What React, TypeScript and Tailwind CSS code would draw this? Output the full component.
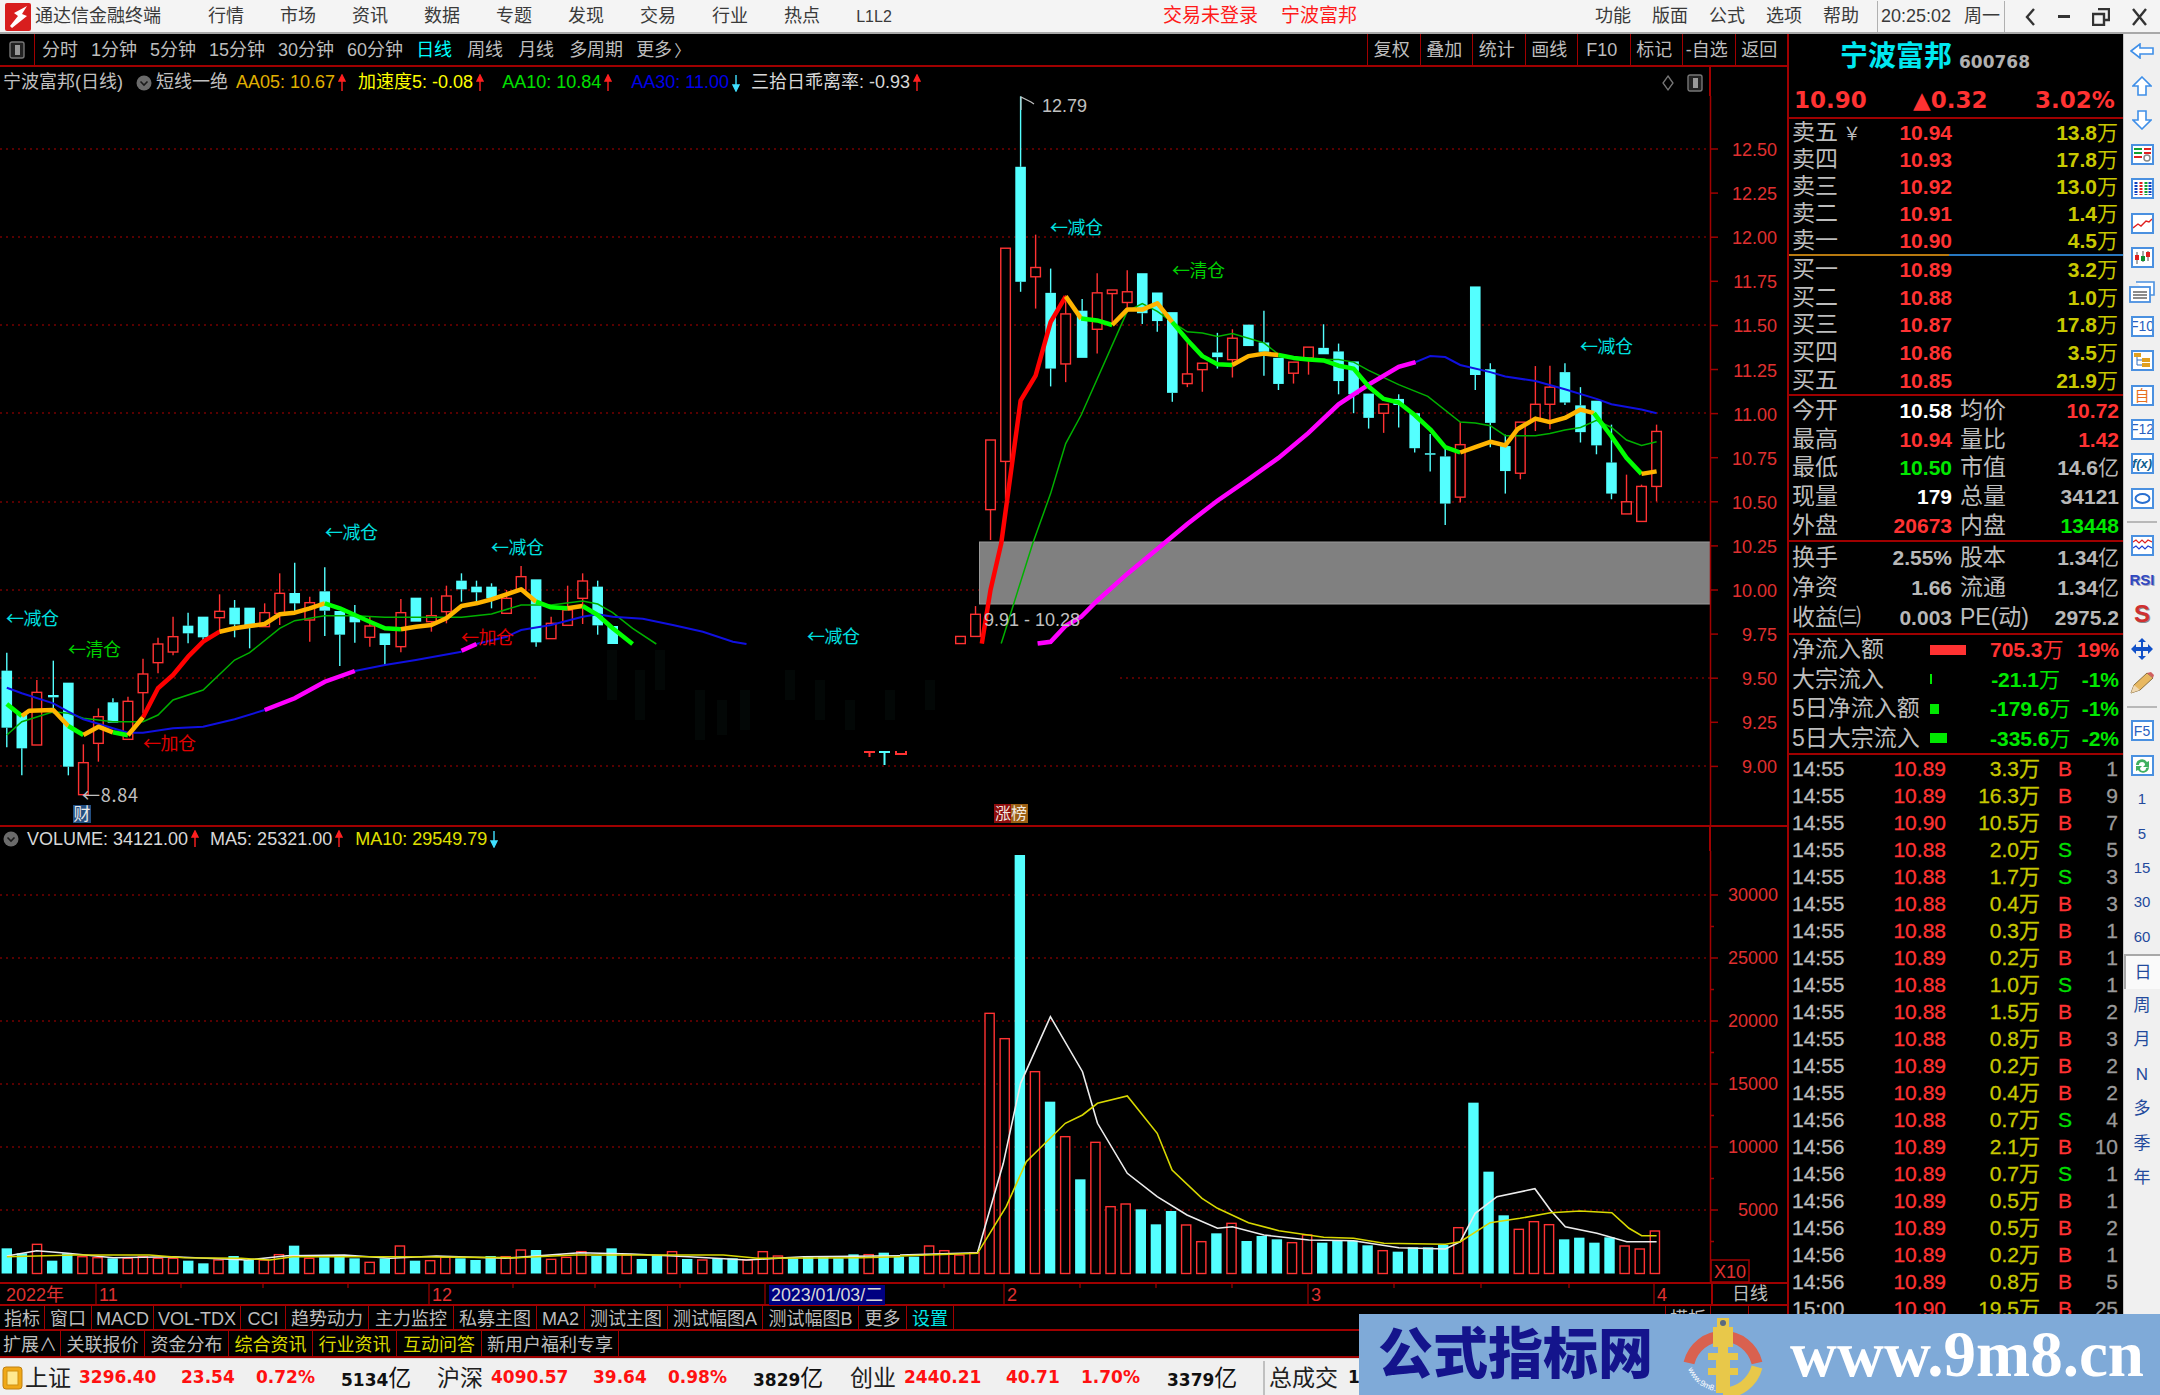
import React from "react";

const RED = "#ff3232";
const CYAN = "#54ffff";
const LINE = "#a00000";
const DIGIT = "[font-family:'DejaVu_Sans','Noto_Sans_CJK_SC',sans-serif] font-bold";

// candle data was read off the picture, [x, wickTop, bodyTop, bodyBottom, wickBottom, "c"|"r"]
type C = [number, number, number, number, number, string];
const leftCandles: C[] = [
  [14, 458, 512, 683, 742, "c"], [45, 640, 640, 745, 826, "c"], [76, 540, 577, 735, 735, "r"], [110, 482, 585, 592, 640, "c"],
  [141, 548, 548, 800, 826, "c"], [172, 733, 788, 884, 884, "r"], [203, 625, 650, 730, 785, "r"], [233, 595, 607, 668, 668, "c"],
  [264, 590, 604, 718, 718, "r"], [295, 476, 522, 578, 640, "r"], [326, 413, 432, 488, 520, "r"], [357, 350, 410, 456, 466, "r"],
  [388, 338, 377, 400, 430, "c"], [419, 350, 350, 412, 430, "c"], [453, 283, 334, 353, 400, "r"], [484, 300, 323, 373, 412, "c"],
  [515, 323, 323, 380, 445, "c"], [546, 310, 338, 380, 380, "r"], [577, 220, 280, 340, 375, "r"], [608, 188, 279, 310, 335, "c"],
  [639, 290, 308, 360, 425, "r"], [670, 202, 274, 332, 408, "c"], [701, 333, 333, 404, 498, "c"], [732, 315, 348, 367, 428, "c"],
  [763, 350, 378, 412, 440, "r"], [794, 400, 400, 435, 495, "c"], [827, 297, 338, 440, 457, "r"], [858, 293, 293, 365, 365, "c"],
  [890, 292, 347, 365, 395, "r"], [921, 257, 288, 335, 370, "r"], [952, 220, 242, 268, 305, "c"], [983, 242, 260, 277, 310, "c"],
  [1014, 250, 260, 295, 325, "c"], [1045, 270, 295, 340, 340, "r"], [1075, 198, 230, 270, 270, "r"], [1106, 238, 238, 427, 440, "c"],
  [1137, 350, 370, 416, 416, "r"], [1171, 257, 330, 376, 376, "r"], [1202, 220, 243, 295, 372, "r"], [1233, 242, 260, 376, 404, "c"],
  [1264, 378, 378, 432, 432, "c"],
];
const rightCandles: C[] = [
  [1, 1530, 1530, 1550, 1550, "r"], [32, 1445, 1468, 1530, 1530, "r"], [63, 980, 980, 1175, 1260, "r"], [94, 443, 443, 1040, 1145, "r"],
  [125, 18, 215, 537, 565, "c"], [156, 405, 497, 523, 612, "r"], [187, 500, 568, 780, 830, "c"], [218, 575, 627, 767, 818, "r"],
  [252, 585, 618, 750, 750, "c"], [283, 513, 568, 670, 738, "r"], [314, 560, 560, 570, 650, "r"], [345, 505, 565, 595, 610, "r"],
  [376, 513, 513, 625, 655, "c"], [407, 567, 567, 647, 677, "c"], [438, 622, 622, 848, 873, "c"], [469, 705, 795, 822, 832, "r"],
  [500, 765, 765, 783, 845, "r"], [531, 680, 735, 748, 780, "c"], [562, 670, 695, 755, 805, "r"], [595, 657, 657, 717, 717, "c"],
  [627, 618, 707, 733, 800, "c"], [657, 750, 750, 823, 840, "c"], [688, 762, 762, 793, 822, "r"], [719, 720, 720, 750, 797, "r"],
  [750, 656, 722, 740, 740, "c"], [781, 710, 732, 815, 852, "c"], [812, 760, 760, 852, 905, "c"], [843, 850, 850, 918, 948, "c"],
  [874, 880, 880, 905, 960, "r"], [905, 852, 865, 882, 945, "c"], [938, 905, 905, 1003, 1015, "c"], [970, 963, 1017, 1020, 1068, "c"],
  [1001, 1005, 1026, 1158, 1218, "c"], [1032, 930, 993, 1140, 1155, "r"], [1063, 550, 550, 798, 840, "c"], [1094, 765, 782, 932, 1000, "c"],
  [1125, 965, 997, 1067, 1130, "c"], [1156, 930, 930, 1073, 1090, "r"], [1187, 773, 880, 925, 955, "r"], [1217, 772, 832, 880, 950, "r"],
  [1248, 765, 790, 875, 882, "c"], [1280, 832, 883, 958, 987, "c"], [1313, 870, 870, 995, 1020, "c"], [1344, 937, 1043, 1130, 1146, "c"],
  [1375, 1077, 1153, 1187, 1187, "r"], [1406, 1105, 1110, 1208, 1208, "r"], [1437, 937, 956, 1110, 1152, "r"],
];

const lx = (x: number) => x / 2.063;
const ly = (y: number) => 500 + y / 3;
const rx = (x: number) => 960 + x / 2.063;
const ry = (y: number) => 90 + y / 2.8;

const L = (p: number[][]) => p.map(([x, y]) => `${lx(x).toFixed(1)},${ly(y).toFixed(1)}`).join(" ");
const R = (p: number[][]) => p.map(([x, y]) => `${rx(x).toFixed(1)},${ry(y).toFixed(1)}`).join(" ");

const GREEN = "#00ff00";
const ORANGE = "#ffb400";

const thick: [string, string][] = [
  [GREEN, L([[14, 612], [45, 648]])],
  [ORANGE, L([[45, 648], [60, 632], [110, 630], [141, 678]])],
  [GREEN, L([[141, 678], [172, 705]])],
  [ORANGE, L([[172, 705], [203, 680], [233, 697]])],
  [GREEN, L([[233, 697], [264, 706]])],
  [ORANGE, L([[264, 706], [295, 652]])],
  ["#ff0000", L([[295, 652], [326, 565], [357, 525], [388, 470], [419, 425], [453, 395]])],
  [ORANGE, L([[453, 395], [484, 385], [515, 378], [546, 372], [577, 343], [608, 338], [639, 325], [670, 310]])],
  [GREEN, L([[670, 310], [701, 325], [732, 345], [763, 365], [794, 385], [827, 388]])],
  [ORANGE, L([[827, 388], [858, 380], [890, 375], [921, 355], [952, 318], [983, 310], [1014, 298], [1045, 283], [1075, 268], [1106, 305]])],
  [GREEN, L([[1106, 305], [1137, 322], [1171, 325]])],
  [ORANGE, L([[1171, 325], [1202, 318]])],
  [GREEN, L([[1202, 318], [1233, 345], [1264, 385], [1305, 432]])],
  ["#ff0000", R([[45, 1550], [63, 1400], [85, 1270], [125, 870], [156, 800], [187, 650], [218, 578]])],
  [ORANGE, R([[218, 578], [250, 640]])],
  [GREEN, R([[250, 640], [283, 645], [314, 658]])],
  [ORANGE, R([[314, 658], [345, 615], [376, 615], [407, 597], [438, 650]])],
  [GREEN, R([[438, 650], [469, 700], [500, 745], [531, 768], [562, 770]])],
  [ORANGE, R([[562, 770], [595, 745], [627, 738], [657, 742]])],
  [GREEN, R([[657, 742], [688, 750], [719, 755], [750, 757], [781, 772], [812, 780], [843, 830], [874, 865], [905, 875], [938, 910], [970, 950], [1001, 1000], [1032, 1015]])],
  [ORANGE, R([[1032, 1015], [1063, 1000], [1094, 985], [1125, 995], [1150, 950], [1187, 920], [1217, 930], [1248, 918], [1280, 895], [1308, 905]])],
  [GREEN, R([[1308, 905], [1344, 970], [1375, 1030], [1406, 1075]])],
  [ORANGE, R([[1406, 1075], [1437, 1068]])],
];

const thinGreen = [
  L([[14, 705], [45, 665], [110, 635], [141, 640], [172, 655], [233, 665], [295, 665], [326, 645], [357, 600], [419, 570], [484, 480], [515, 458], [577, 385], [608, 362], [670, 347], [732, 347], [794, 352], [858, 352], [952, 352], [1014, 342], [1075, 315], [1137, 315], [1202, 303], [1233, 312], [1264, 338], [1305, 385], [1354, 432]]),
  R([[85, 1550], [150, 1270], [187, 1130], [218, 990], [250, 910], [345, 620], [376, 598], [407, 620], [438, 650], [469, 677], [500, 680], [531, 690], [562, 682], [595, 695], [627, 708], [657, 740], [719, 755], [781, 755], [812, 762], [843, 785], [905, 825], [965, 858], [1032, 930], [1063, 932], [1094, 940], [1125, 968], [1187, 968], [1217, 962], [1248, 952], [1280, 945], [1313, 925], [1344, 945], [1375, 980], [1406, 995], [1437, 985]]),
];
const blue = [
  L([[14, 563], [45, 580], [110, 610], [141, 635], [172, 658], [233, 685], [264, 698], [295, 698], [357, 685], [419, 680], [484, 658], [546, 630]]),
  L([[732, 513], [794, 495], [858, 480], [952, 455]]),
  L([[983, 432], [1045, 410], [1075, 390], [1137, 375], [1202, 350], [1233, 343], [1264, 350], [1326, 356], [1388, 375], [1450, 395], [1512, 425], [1540, 432]]),
  R([[940, 762], [970, 745], [1001, 748], [1032, 770], [1094, 790], [1125, 802], [1187, 815], [1248, 838], [1313, 865], [1344, 880], [1406, 895], [1437, 905]]),
];
const magenta = [
  L([[546, 630], [608, 595], [670, 545], [732, 513]]),
  L([[952, 452], [983, 432]]),
  R([[160, 1550], [187, 1545], [218, 1500], [250, 1475], [283, 1430], [345, 1355], [407, 1285], [469, 1215], [531, 1150], [595, 1090], [657, 1030], [719, 960], [781, 880], [843, 825], [905, 775], [940, 762]]),
];

const labels: [number, number, string, string][] = [
  [6, 619, "←减仓", "#00e0e0"], [68, 650, "←清仓", "#00d000"], [143, 744, "←加仓", "#e00000"],
  [325, 533, "←减仓", "#00e0e0"], [491, 548, "←减仓", "#00e0e0"], [461, 638, "←加仓", "#e00000"],
  [807, 637, "←减仓", "#00e0e0"], [1050, 228, "←减仓", "#00e0e0"], [1172, 271, "←清仓", "#00d000"], [1580, 347, "←减仓", "#00e0e0"],
];

const priceAxis = ["12.50", "12.25", "12.00", "11.75", "11.50", "11.25", "11.00", "10.75", "10.50", "10.25", "10.00", "9.75", "9.50", "9.25", "9.00"];

function Candle({ x, c, y }: { x: number; c: C; y: (v: number) => number }) {
  const [, wt, bt, bb, wb, k] = c;
  const col = k === "c" ? CYAN : RED;
  return (
    <g>
      <line x1={x} x2={x} y1={y(wt)} y2={y(bt)} stroke={col} strokeWidth={1.4} />
      <line x1={x} x2={x} y1={y(bb)} y2={y(wb)} stroke={col} strokeWidth={1.4} />
      {k === "c" ? (
        <rect x={x - 5.3} y={y(bt)} width={10.6} height={Math.max(y(bb) - y(bt), 1.5)} fill={CYAN} />
      ) : (
        <rect x={x - 4.8} y={y(bt)} width={9.6} height={Math.max(y(bb) - y(bt), 1)} fill="#000" stroke={RED} strokeWidth={1.4} />
      )}
    </g>
  );
}

function PriceChart() {
  return (
    <svg className="block w-full flex-1" viewBox="0 96 1787 729" width={1787} height={729}>
      {[149, 237, 325, 413, 502, 590, 766].map((y) => (
        <line key={y} x1={0} x2={1710} y1={y} y2={y} stroke="#b00000" strokeWidth={1.2} strokeDasharray="2 4" />
      ))}
      <line x1={0} x2={538} y1={678} y2={678} stroke="#b00000" strokeWidth={1.2} strokeDasharray="2 4" />
      <line x1={1120} x2={1710} y1={678} y2={678} stroke="#b00000" strokeWidth={1.2} strokeDasharray="2 4" />
      <rect x={979.5} y={542} width={731} height={62} fill="#808080" stroke="#9a9a9a" strokeWidth={1} />

      {/* barely visible bars behind the hidden part */}
      {[[612, 650, 700], [640, 670, 720], [660, 650, 690], [700, 690, 740], [722, 700, 735], [745, 690, 730], [790, 670, 700], [820, 680, 720], [850, 700, 730], [890, 690, 720], [930, 680, 710]].map(([x, a, b]) => (
        <rect key={x} x={x - 5} y={a} width={10} height={b - a} fill="#030706" />
      ))}

      {leftCandles.map((c) => <Candle key={c[0]} x={lx(c[0])} c={c} y={ly} />)}
      {rightCandles.map((c) => <Candle key={c[0]} x={rx(c[0])} c={c} y={ry} />)}

      <path d="M864 752h11M869.5 752v5" stroke={RED} strokeWidth={2} fill="none" />
      <path d="M879 752h11M884.5 752v13" stroke={CYAN} strokeWidth={2} fill="none" />
      <path d="M896 751v3h10v-3" stroke={RED} strokeWidth={2} fill="none" />

      {thinGreen.map((p) => <polyline key={p} points={p} fill="none" stroke="#00b000" strokeWidth={1.5} />)}
      {blue.map((p) => <polyline key={p} points={p} fill="none" stroke="#1010e0" strokeWidth={2} />)}
      {magenta.map((p) => <polyline key={p} points={p} fill="none" stroke="#ff00ff" strokeWidth={4.5} />)}
      {thick.map(([col, p]) => <polyline key={p} points={p} fill="none" stroke={col} strokeWidth={4.5} strokeLinejoin="round" />)}

      {labels.map(([x, y, t, col]) => (
        <text key={`${x}${y}`} x={x} y={y + 6} fill={col} fontSize={18} fontFamily="Noto Sans CJK SC" textLength={53}>{t}</text>
      ))}

      <path d="M1021 110V97l10 5 3 2" stroke="#c0c0c0" strokeWidth={1.2} fill="none" />
      <text x={1042} y={112} fill="#c0c0c0" fontSize={18}>12.79</text>
      <text x={82} y={802} fill="#c0c0c0" fontSize={18} fontFamily="Noto Sans CJK SC" textLength={56}>←8.84</text>
      <rect x={73} y={805} width={18} height={18} fill="#234e80" />
      <text x={73.5} y={820} fill="#e8e8e8" fontSize={17}>财</text>
      <text x={984} y={626} fill="#c0c0c0" fontSize={18}>9.91 - 10.28</text>

      <rect x={994} y={804} width={17} height={19} fill="#8e0d0d" />
      <rect x={1011} y={804} width={17} height={19} fill="#9b5f14" />
      <text x={995} y={819} fill="#f0e8e0" fontSize={16}>涨榜</text>

      <line x1={1710.5} x2={1710.5} y1={96} y2={826} stroke={LINE} strokeWidth={1.5} />
      {priceAxis.map((t, i) => {
        const y = 149 + i * 44.1;
        return (
          <g key={t}>
            <line x1={1710} x2={1718} y1={y} y2={y} stroke={LINE} strokeWidth={1.5} />
            <text x={1777} y={y + 7} textAnchor="end" fill="#e03030" fontSize={18}>{t}</text>
          </g>
        );
      })}
    </svg>
  );
}

const volLeft = "c1255 c1270 r1243 c1292 c1270 r1280 r1283 c1285 r1285 r1280 r1285 r1285 c1292 c1300 r1290 c1278 c1290 r1290 r1274 c1247 r1285 c1282 c1275 c1285 r1297 c1285 r1248 c1292 r1292 r1282 c1285 c1290 c1278 r1280 r1260 c1260 r1288 r1282 r1265 c1278 c1255 r1275 c1287 c1275 r1265 c1287 r1290 c1285 c1285 r1290 r1265 r1278 c1285 c1280 c1280 c1285 c1273 r1274 c1268 c1280".split(" ");
const volRight = "c1310 r1278 r1292 r1305 r1298 r580 r656 c105 r755 c845 r950 c1078 r967 r1160 r1152 c1168 c1213 c1173 r1215 r1265 c1240 r1210 c1263 c1248 c1258 r1268 r1245 c1268 c1262 c1262 c1276 r1292 c1295 c1282 c1282 c1275 r1223 c848 c1055 c1186 r1228 r1205 r1214 c1258 c1253 c1268 c1252 r1278 r1287 r1233".split(" ");

const v9 = (p: number[][]) => p.map(([x, y]) => `${(x / 1.742).toFixed(1)},${(830 + y / 3).toFixed(1)}`).join(" ");
const v8 = (p: number[][]) => p.map(([x, y]) => `${(900 + x / 1.742).toFixed(1)},${(820 + y / 3).toFixed(1)}`).join(" ");

const volWhite = [
  v9([[12, 1278], [64, 1262], [118, 1270], [197, 1283], [300, 1280], [430, 1290], [500, 1277], [600, 1275], [680, 1285], [760, 1278], [880, 1285], [1010, 1268], [1100, 1272], [1200, 1280], [1300, 1290], [1400, 1280], [1568, 1277]]),
  v8([[0, 1305], [135, 1298], [180, 1030], [210, 790], [262, 590], [318, 755], [344, 910], [396, 1060], [448, 1130], [500, 1185], [553, 1225], [579, 1220], [634, 1245], [712, 1260], [790, 1262], [869, 1283], [950, 1287], [976, 1265], [1002, 1180], [1040, 1130], [1106, 1106], [1133, 1170], [1159, 1220], [1214, 1240], [1266, 1265], [1318, 1265]]),
];
const volYellow = [
  v9([[12, 1280], [130, 1275], [260, 1275], [320, 1283], [420, 1285], [470, 1290], [510, 1280], [700, 1280], [900, 1283], [1000, 1275], [1100, 1275], [1260, 1275], [1320, 1285], [1500, 1283], [1568, 1280]]),
  v8([[0, 1308], [135, 1300], [185, 1160], [220, 1025], [288, 910], [318, 885], [344, 850], [396, 828], [448, 940], [474, 1050], [526, 1135], [553, 1165], [607, 1208], [660, 1232], [738, 1252], [790, 1255], [843, 1270], [950, 1273], [976, 1265], [1028, 1208], [1080, 1195], [1133, 1178], [1185, 1173], [1240, 1178], [1270, 1225], [1292, 1247], [1318, 1247]]),
];

function VolBar({ x, top, kind }: { x: number; top: number; kind: string }) {
  const base = 1273.5;
  return kind === "c" ? (
    <rect x={x - 5.2} y={top} width={10.4} height={base - top} fill={CYAN} />
  ) : (
    <rect x={x - 4.6} y={top} width={9.2} height={base - top} fill="#000" stroke={RED} strokeWidth={1.4} />
  );
}

function VolumeChart() {
  return (
    <svg className="block" viewBox="0 851 1787 431" width={1787} height={431}>
      {[30000, 25000, 20000, 15000, 10000, 5000].map((v) => {
        const y = 1273 - v * 0.0126;
        return (
          <g key={v}>
            <line x1={0} x2={1710} y1={y} y2={y} stroke="#b00000" strokeWidth={1.2} strokeDasharray="2 4" />
            <line x1={1710} x2={1718} y1={y} y2={y} stroke={LINE} strokeWidth={1.5} />
            <line x1={1710} x2={1714} y1={y + 31.5} y2={y + 31.5} stroke={LINE} strokeWidth={1.5} />
            <text x={1778} y={y + 6} textAnchor="end" fill="#e03030" fontSize={18}>{v}</text>
          </g>
        );
      })}
      {volLeft.map((s, i) => (
        <VolBar key={i} x={6.8 + 15.12 * i} top={830 + Number(s.slice(1)) / 3} kind={s[0]} />
      ))}
      {volRight.map((s, i) => (
        <VolBar key={i} x={6.8 + 15.12 * (i + 60)} top={820 + Number(s.slice(1)) / 3} kind={s[0]} />
      ))}
      {volWhite.map((p) => <polyline key={p} points={p} fill="none" stroke="#ececec" strokeWidth={1.6} />)}
      {volYellow.map((p) => <polyline key={p} points={p} fill="none" stroke="#d8d800" strokeWidth={1.6} />)}
      <line x1={1710.5} x2={1710.5} y1={851} y2={1282} stroke={LINE} strokeWidth={1.5} />
      <rect x={1711} y={1260} width={38} height={22} fill="none" stroke={LINE} strokeWidth={1.5} />
      <text x={1714} y={1278} fill="#e03030" fontSize={18}>X10</text>
    </svg>
  );
}

function DateAxis() {
  const ticks = [181, 263, 348, 513, 595, 680, 944, 1080, 1156, 1232, 1394, 1481, 1569];
  const majors: [number, string][] = [[96, "11"], [429, "12"], [1004, "2"], [1308, "3"], [1654, "4"]];
  return (
    <svg className="block shrink-0" viewBox="0 0 1711 22" width={1711} height={22}>
      {ticks.map((x) => <line key={x} x1={x} x2={x} y1={0} y2={4} stroke={LINE} strokeWidth={1.2} />)}
      <text x={6} y={17} fill="#e03030" fontSize={18}>2022年</text>
      {majors.map(([x, t]) => (
        <g key={t}>
          <line x1={x} x2={x} y1={0} y2={22} stroke={LINE} strokeWidth={1.2} />
          <text x={x + 3} y={17} fill="#e03030" fontSize={18}>{t}</text>
        </g>
      ))}
      <line x1={765} x2={765} y1={0} y2={22} stroke={LINE} strokeWidth={1.2} />
      <rect x={769} y={1} width={116} height={20} fill="#000080" />
      <text x={771} y={17} fill="#d8d8d8" fontSize={18} textLength={112} lengthAdjust="spacingAndGlyphs">2023/01/03/二</text>
    </svg>
  );
}

function Arrow({ up = true, color = "#ff2020" }: { up?: boolean; color?: string }) {
  return (
    <svg width={8} height={18} viewBox="0 0 8 18" className="shrink-0">
      {up ? (
        <path d="M4 17V4M1 7l3-6 3 6z" stroke={color} strokeWidth={1.4} fill={color} />
      ) : (
        <path d="M4 1v13M1 11l3 6 3-6z" stroke={color} strokeWidth={1.4} fill={color} />
      )}
    </svg>
  );
}

function RoundIcon() {
  return (
    <svg width={16} height={16} viewBox="0 0 16 16" className="shrink-0">
      <circle cx={8} cy={8} r={7.5} fill="#6b6b6b" />
      <path d="M4.5 6.5 8 10l3.5-3.5" stroke="#1a1a1a" strokeWidth={1.6} fill="none" />
    </svg>
  );
}

function PanelToggle() {
  return (
    <svg width={16} height={18} viewBox="0 0 16 18" className="shrink-0">
      <rect x={1} y={1} width={14} height={16} rx={2} fill="#222" stroke="#777" strokeWidth={1.4} />
      <rect x={6} y={4} width={5} height={10} fill="#999" />
    </svg>
  );
}

function MenuBar() {
  const menus = ["行情", "市场", "资讯", "数据", "专题", "发现", "交易", "行业", "热点"];
  const right = ["功能", "版面", "公式", "选项", "帮助"];
  return (
    <div className="h-[34px] shrink-0 flex items-center pt-[1px] bg-[#f4f4f4] border-b-2 border-[#a8a8a8] text-[18px] text-[#3a3a3a]">
      <svg width={26} height={28} viewBox="0 0 26 28" className="ml-[5px] shrink-0">
        <rect width={26} height={28} rx={2} fill="#d81e1e" />
        <path d="M22 3 9 10l4 3-8 10 2 2 15-12-5-2z" fill="#fff" />
      </svg>
      <span className="ml-[4px] w-[126px] whitespace-nowrap">通达信金融终端</span>
      <div className="ml-[47px] flex gap-[36px]">
        {menus.map((m) => <span key={m} className="w-[36px] text-center whitespace-nowrap">{m}</span>)}
        <span className="w-[36px] text-center whitespace-nowrap text-[16px] leading-[27px]">L1L2</span>
      </div>
      <span className="ml-[271px] text-[19px] text-[#ff1a1a] whitespace-nowrap">交易未登录</span>
      <span className="ml-[23px] text-[19px] text-[#ff1a1a] whitespace-nowrap">宁波富邦</span>
      <div className="ml-[238px] flex gap-[21px]">
        {right.map((m) => <span key={m} className="whitespace-nowrap">{m}</span>)}
      </div>
      <div className="ml-[18px] h-full pl-[3px] pr-[4px] flex items-center gap-[10px] border-x border-[#b0b0b0]">
        <span className="text-[18px] w-[73px] whitespace-nowrap">20:25:02</span>
        <span className="whitespace-nowrap">周一</span>
      </div>
      <div className="flex-1 flex items-center justify-around pr-[2px] pl-[8px]">
        <svg width={12} height={20} viewBox="0 0 12 20"><path d="M10 2 3 10l7 8" stroke="#333" strokeWidth={2.4} fill="none" /></svg>
        <span className="w-[12px] h-[3px] bg-[#333]" />
        <svg width={18} height={18} viewBox="0 0 18 18"><path d="M6 1h11v11h-4M1 6h11v11H1z" stroke="#333" strokeWidth={2.4} fill="none" /></svg>
        <svg width={15} height={18} viewBox="0 0 15 18"><path d="m1 1 13 16M14 1 1 17" stroke="#333" strokeWidth={2.4} /></svg>
      </div>
    </div>
  );
}

function Toolbar() {
  const tabs = ["分时", "1分钟", "5分钟", "15分钟", "30分钟", "60分钟"];
  const actions = ["复权", "叠加", "统计", "画线", "F10", "标记", "-自选", "返回"];
  return (
    <div className="h-[33px] shrink-0 flex items-stretch border-b-2 border-[#a00000] text-[18px] text-[#bdbdbd]">
      <div className="w-[35px] flex items-center justify-center border-r border-[#a00000]">
        <PanelToggle />
      </div>
      <div className="ml-[7px] pt-[2px] flex items-center gap-[13px] whitespace-nowrap">
        {tabs.map((t) => <span key={t}>{t}</span>)}
        <span className="mr-[2px] text-[#00ffff]">日线</span>
        <span className="mr-[2px]">周线</span>
        <span className="mr-[2px]">月线</span>
        <span>多周期</span>
        <span>更多<span className="ml-[2px] text-[16px]">〉</span></span>
      </div>
      <div className="ml-auto flex">
        {actions.map((t) => (
          <span key={t} className="w-[52.5px] pt-[2px] pr-[4px] flex items-center justify-center border-l border-[#a00000] whitespace-nowrap">{t}</span>
        ))}
      </div>
    </div>
  );
}

function Legend() {
  return (
    <div className="h-[29px] shrink-0 w-[1711px] pl-[3px] pt-[2px] flex items-center border-r-2 border-[#a00000] text-[18px] whitespace-nowrap">
      <span className="text-[#c0c0c0]">宁波富邦(日线)</span>
      <span className="ml-[13px]"><RoundIcon /></span>
      <span className="ml-[4px] text-[#c0c0c0]">短线一绝</span>
      <span className="ml-[8px] text-[#e0b000]">AA05: 10.67</span>
      <span className="ml-[3px]"><Arrow /></span>
      <span className="ml-[12px] text-[#ffff00]">加速度5: -0.08</span>
      <span className="ml-[3px]"><Arrow /></span>
      <span className="ml-[18px] text-[#00e000]">AA10: 10.84</span>
      <span className="ml-[3px]"><Arrow /></span>
      <span className="ml-[19px] text-[#0000e8]">AA30: 11.00</span>
      <span className="ml-[3px]"><Arrow up={false} color="#40e0ff" /></span>
      <span className="ml-[11px] text-[#d8d8d8]">三拾日乖离率: -0.93</span>
      <span className="ml-[3px]"><Arrow /></span>
      <svg width={14} height={18} viewBox="0 0 14 18" className="ml-auto mr-[12px]">
        <path d="M7 2 12 9 7 16 2 9z" stroke="#777" strokeWidth={1.3} fill="none" />
      </svg>
      <span className="mr-[6px]"><PanelToggle /></span>
    </div>
  );
}

function VolumeLegend() {
  return (
    <div className="h-[24px] shrink-0 w-[1711px] pl-[3px] flex items-center border-r-2 border-[#a00000] text-[18px] whitespace-nowrap">
      <RoundIcon />
      <span className="ml-[8px] text-[#d8d8d8]">VOLUME: 34121.00</span>
      <span className="ml-[3px]"><Arrow /></span>
      <span className="ml-[11px] text-[#d8d8d8]">MA5: 25321.00</span>
      <span className="ml-[3px]"><Arrow /></span>
      <span className="ml-[12px] text-[#e0e000]">MA10: 29549.79</span>
      <span className="ml-[3px]"><Arrow up={false} color="#40e0ff" /></span>
    </div>
  );
}

const tabs1 = [
  ["指标", "w-[45px]", ""], ["窗口", "w-[47px]", ""], ["MACD", "w-[62px]", ""], ["VOL-TDX", "w-[87px]", ""], ["CCI", "w-[45px]", ""],
  ["趋势动力", "w-[83px]", ""], ["主力监控", "w-[85px]", ""], ["私募主图", "w-[83px]", ""], ["MA2", "w-[48px]", ""], ["测试主图", "w-[83px]", ""],
  ["测试幅图A", "w-[95px]", ""], ["测试幅图B", "w-[96px]", ""], ["更多", "w-[48px]", ""], ["设置", "w-[47px]", "text-[#00e8e8]"],
];
const tabs2 = [
  ["扩展∧", "w-[61px]", ""], ["关联报价", "w-[84px]", ""], ["资金分布", "w-[84px]", ""], ["综合资讯", "w-[84px]", "text-[#d8d800]"],
  ["行业资讯", "w-[84px]", "text-[#d8d800]"], ["互动问答", "w-[85px]", "text-[#d8d800]"], ["新用户福利专享", "w-[137px]", ""],
];

function BottomTabs({ items, h, children }: { items: string[][]; h: string; children?: React.ReactNode }) {
  return (
    <div className={`${h} shrink-0 flex items-stretch border-b-2 border-[#a00000] text-[18px] leading-none text-[#bdbdbd]`}>
      {items.map(([t, w, col]) => (
        <span key={t} className={`${w} ${col} pt-[3px] flex items-center justify-center border-r border-[#a00000] whitespace-nowrap overflow-hidden`}>{t}</span>
      ))}
      {children}
    </div>
  );
}

const yuan = "text-[#c8c800]";

function unit(s: string) {
  return s.endsWith("亿") ? <>{s.slice(0, -1)}<span className="font-normal">亿</span></> : s;
}

function QuoteRow({ label, price, vol, yen }: { label: string; price: string; vol: string; yen?: boolean }) {
  return (
    <div className="flex-1 flex items-center leading-none">
      <span className="pl-[3px] w-[100px] text-[23px] text-[#bdbdbd] whitespace-nowrap">
        {label}
        {yen && <span className="ml-[5px] text-[18px]">￥</span>}
      </span>
      <span className="w-[63px] text-right text-[21px] font-bold text-[#ff3232]">{price}</span>
      <span className={`flex-1 text-right pr-[5px] text-[21px] font-bold ${yuan} whitespace-nowrap`}>
        {vol}<span className="font-normal">万</span>
      </span>
    </div>
  );
}

function StatRow({ a, av, ac, b, bv, bc }: { a: string; av: string; ac: string; b: string; bv: string; bc: string }) {
  return (
    <div className="flex-1 flex items-center whitespace-nowrap leading-none">
      <span className="pl-[3px] w-[100px] text-[23px] text-[#bdbdbd]">{a}</span>
      <span className={`w-[63px] text-right text-[21px] font-bold ${ac}`}>{av}</span>
      <span className="ml-[8px] w-[60px] text-[23px] text-[#bdbdbd]">{b}</span>
      <span className={`flex-1 text-right pr-[4px] text-[21px] font-bold ${bc}`}>{unit(bv)}</span>
    </div>
  );
}

function FlowRow({ label, bar, val, pct, up }: { label: string; bar: string; val: string; pct: string; up?: boolean }) {
  const col = up ? "text-[#ff3232]" : "text-[#00e800]";
  return (
    <div className="flex-1 flex items-center whitespace-nowrap leading-none">
      <span className="pl-[3px] w-[141px] text-[23px] text-[#bdbdbd]">{label}</span>
      <span className="w-[60px] flex items-center"><span className={bar} /></span>
      <span className={`w-[70px] text-right text-[21px] font-bold ${col}`}>{val}<span className="font-normal">万</span></span>
      <span className={`flex-1 text-right pr-[4px] text-[21px] font-bold ${col}`}>{pct}</span>
    </div>
  );
}

const ticks: [string, string, string, string, string][] = [
  ["14:55", "10.89", "3.3", "B", "1"], ["14:55", "10.89", "16.3", "B", "9"], ["14:55", "10.90", "10.5", "B", "7"],
  ["14:55", "10.88", "2.0", "S", "5"], ["14:55", "10.88", "1.7", "S", "3"], ["14:55", "10.88", "0.4", "B", "3"],
  ["14:55", "10.88", "0.3", "B", "1"], ["14:55", "10.89", "0.2", "B", "1"], ["14:55", "10.88", "1.0", "S", "1"],
  ["14:55", "10.88", "1.5", "B", "2"], ["14:55", "10.88", "0.8", "B", "3"], ["14:55", "10.89", "0.2", "B", "2"],
  ["14:55", "10.89", "0.4", "B", "2"], ["14:56", "10.88", "0.7", "S", "4"], ["14:56", "10.89", "2.1", "B", "10"],
  ["14:56", "10.89", "0.7", "S", "1"], ["14:56", "10.89", "0.5", "B", "1"], ["14:56", "10.89", "0.5", "B", "2"],
  ["14:56", "10.89", "0.2", "B", "1"], ["14:56", "10.89", "0.8", "B", "5"], ["15:00", "10.90", "19.5", "B", "25"],
];

function QuotePanel() {
  return (
    <div className="w-[336px] shrink-0 flex flex-col border-l-2 border-[#a00000] overflow-hidden">
      <div className="h-[85px] shrink-0 flex flex-col border-b-2 border-[#a00000]">
        <div className="h-[49px] pl-[51px] flex items-end pb-[12px]">
          <span className="text-[28px] leading-none font-bold text-[#00e8f0] whitespace-nowrap">宁波富邦</span>
          <span className={`ml-[7px] text-[17px] leading-none text-[#b0b0b0] ${DIGIT}`}>600768</span>
        </div>
        <div className={`flex-1 flex items-center text-[23px] leading-none text-[#ff3232] whitespace-nowrap ${DIGIT}`}>
          <span className="ml-[5px] w-[120px]">10.90</span>
          <span className="-ml-[1px] w-[122px]">▲0.32</span>
          <span>3.02%</span>
        </div>
      </div>
      <div className="h-[135px] shrink-0 flex flex-col">
        <QuoteRow label="卖五" price="10.94" vol="13.8" yen />
        <QuoteRow label="卖四" price="10.93" vol="17.8" />
        <QuoteRow label="卖三" price="10.92" vol="13.0" />
        <QuoteRow label="卖二" price="10.91" vol="1.4" />
        <QuoteRow label="卖一" price="10.90" vol="4.5" />
      </div>
      <div className="h-[2px] shrink-0 flex">
        <span className="w-[160px] bg-[#b87a10]" />
        <span className="flex-1 bg-[#2878c0]" />
      </div>
      <div className="h-[140px] shrink-0 flex flex-col border-b-2 border-[#a00000]">
        <QuoteRow label="买一" price="10.89" vol="3.2" />
        <QuoteRow label="买二" price="10.88" vol="1.0" />
        <QuoteRow label="买三" price="10.87" vol="17.8" />
        <QuoteRow label="买四" price="10.86" vol="3.5" />
        <QuoteRow label="买五" price="10.85" vol="21.9" />
      </div>
      <div className="h-[146px] shrink-0 flex flex-col border-b-2 border-[#a00000]">
        <StatRow a="今开" av="10.58" ac="text-white" b="均价" bv="10.72" bc="text-[#ff3232]" />
        <StatRow a="最高" av="10.94" ac="text-[#ff3232]" b="量比" bv="1.42" bc="text-[#ff3232]" />
        <StatRow a="最低" av="10.50" ac="text-[#00e800]" b="市值" bv="14.6亿" bc="text-[#b8b8b8]" />
        <StatRow a="现量" av="179" ac="text-white" b="总量" bv="34121" bc="text-[#b8b8b8]" />
        <StatRow a="外盘" av="20673" ac="text-[#ff3232]" b="内盘" bv="13448" bc="text-[#00e800]" />
      </div>
      <div className="h-[93px] shrink-0 flex flex-col border-b-2 border-[#a00000]">
        <StatRow a="换手" av="2.55%" ac="text-[#b8b8b8]" b="股本" bv="1.34亿" bc="text-[#b8b8b8]" />
        <StatRow a="净资" av="1.66" ac="text-[#b8b8b8]" b="流通" bv="1.34亿" bc="text-[#b8b8b8]" />
        <StatRow a="收益㈢" av="0.003" ac="text-[#b8b8b8]" b="PE(动)" bv="2975.2" bc="text-[#b8b8b8]" />
      </div>
      <div className="h-[120px] shrink-0 flex flex-col border-b-2 border-[#a00000]">
        <FlowRow label="净流入额" bar="w-[36px] h-[10px] bg-[#ff3232]" val="705.3" pct="19%" up />
        <FlowRow label="大宗流入" bar="w-[2px] h-[10px] bg-[#00e800]" val="-21.1" pct="-1%" />
        <FlowRow label="5日净流入额" bar="w-[9px] h-[10px] bg-[#00e800]" val="-179.6" pct="-1%" />
        <FlowRow label="5日大宗流入" bar="w-[17px] h-[10px] bg-[#00e800]" val="-335.6" pct="-2%" />
      </div>
      {ticks.map(([t, p, v, s, n], i) => (
        <div key={i} className="h-[27px] shrink-0 flex items-center text-[21px] leading-none whitespace-nowrap [-webkit-text-stroke:0.3px]">
          <span className="pl-[3px] w-[100px] text-[#bdbdbd]">{t}</span>
          <span className="w-[57px] text-right text-[#ff3232]">{p}</span>
          <span className={`w-[94px] text-right ${yuan}`}>{v}万</span>
          <span className={`ml-[18px] w-[15px] ${s === "B" ? "text-[#ff3232]" : "text-[#00e000]"}`}>{s}</span>
          <span className="flex-1 text-right pr-[5px] text-[#9a9a9a]">{n}</span>
        </div>
      ))}
    </div>
  );
}

function SideBox({ children }: { children: React.ReactNode }) {
  return (
    <span className="w-[23px] h-[21px] flex items-center justify-center bg-white border-2 border-[#4a90e0] text-[14px] leading-none text-[#2a5fc0] overflow-hidden">
      {children}
    </span>
  );
}

function Cell({ children }: { children: React.ReactNode }) {
  return <div className="h-[34.4px] shrink-0 flex items-center justify-center">{children}</div>;
}

function Sep() {
  return (
    <div className="h-[13px] shrink-0 flex items-center px-[3px]">
      <span className="w-full h-[2px] bg-[#b8b8b8]" />
    </div>
  );
}

function Sidebar() {
  const outline = { stroke: "#3f8fe8", strokeWidth: 1.6, fill: "#fff" };
  const nums = ["1", "5", "15", "30", "60"];
  const days = ["周", "月", "N", "多", "季", "年"];
  return (
    <div className="flex-1 flex flex-col bg-[#f0f0f0] border-l border-[#c8c8c8] overflow-hidden">
      <Cell><svg width={24} height={16} viewBox="0 0 24 16"><path d="M1 8 10 1v4h13v6H10v4z" {...outline} /></svg></Cell>
      <Cell><svg width={20} height={20} viewBox="0 0 20 20"><path d="M10 1 19 10h-5v9H6v-9H1z" {...outline} /></svg></Cell>
      <Cell><svg width={20} height={20} viewBox="0 0 20 20"><path d="M10 19 19 10h-5V1H6v9H1z" {...outline} /></svg></Cell>
      <Cell><SideBox><svg width={19} height={17} viewBox="0 0 19 17"><path d="M1 3h8M1 7h8" stroke="#10a030" strokeWidth={2} /><path d="M1 11h8M11 3h7M11 7h7" stroke="#e02020" strokeWidth={2} /><circle cx={14} cy={12} r={3} fill="none" stroke="#888" strokeWidth={1.5} /></svg></SideBox></Cell>
      <Cell><SideBox><svg width={19} height={17} viewBox="0 0 19 17"><path d="M3 2v13" stroke="#1040c0" strokeWidth={3} strokeDasharray="2 1" /><path d="M8 2v13" stroke="#e02020" strokeWidth={3} strokeDasharray="2 1" /><path d="M13 2v13" stroke="#10a030" strokeWidth={3} strokeDasharray="2 1" /><path d="M17 2v13" stroke="#1040c0" strokeWidth={3} strokeDasharray="2 1" /></svg></SideBox></Cell>
      <Cell><SideBox><svg width={19} height={17} viewBox="0 0 19 17"><path d="M0 13 5 9l3 2 5-5 3 1 3-3" stroke="#e02020" strokeWidth={1.4} fill="none" /></svg></SideBox></Cell>
      <Cell><SideBox><svg width={19} height={17} viewBox="0 0 19 17"><path d="M4 3v12M10 2v11M15 2v10" stroke="#555" strokeWidth={1} /><rect x={2} y={6} width={4} height={5} fill="#e02020" /><rect x={8} y={7} width={4} height={5} fill="#109030" /><rect x={13} y={3} width={4} height={5} fill="#e02020" /></svg></SideBox></Cell>
      <Cell><svg width={26} height={22} viewBox="0 0 26 22"><path d="M7 1h18v13h-4" fill="#fff" stroke="#4a90e0" strokeWidth={1.6} /><rect x={1} y={6} width={20} height={15} fill="#fff" stroke="#4a90e0" strokeWidth={1.8} /><path d="M4 11h14M4 14h14M4 17h14" stroke="#666" strokeWidth={1.4} /></svg></Cell>
      <Cell><SideBox>F10</SideBox></Cell>
      <Cell><SideBox><svg width={19} height={17} viewBox="0 0 19 17"><rect x={1} y={1} width={7} height={4} fill="#e0a020" /><rect x={9} y={6} width={8} height={4} fill="#e0a020" /><rect x={9} y={11} width={8} height={4} fill="#e0a020" /><path d="M4 5v8h5M4 8h5" stroke="#3070c0" fill="none" /></svg></SideBox></Cell>
      <Cell><SideBox><span className="text-[#e87020] text-[15px]">自</span></SideBox></Cell>
      <Cell><SideBox>F12</SideBox></Cell>
      <Cell><SideBox><span className="text-[13px] italic font-bold text-[#106090] whitespace-nowrap">f(x)</span></SideBox></Cell>
      <Cell><SideBox><svg width={17} height={13} viewBox="0 0 17 13"><ellipse cx={8.5} cy={6.5} rx={7} ry={4.5} fill="none" stroke="#2a70d0" strokeWidth={2} /></svg></SideBox></Cell>
      <Sep />
      <Cell><SideBox><svg width={19} height={17} viewBox="0 0 19 17"><path d="m0 5 3-2 3 3 3-3 3 3 3-3 4 2" stroke="#e02020" strokeWidth={1.2} fill="none" /><path d="m0 11 3-2 3 3 3-3 3 3 3-3 4 2" stroke="#2040d0" strokeWidth={1.2} fill="none" /></svg></SideBox></Cell>
      <Cell><span className="text-[15px] font-bold text-[#3048c0] [text-shadow:1px_1px_0_#a0a0c0]">RSI</span></Cell>
      <Cell><span className="text-[24px] leading-none font-bold text-[#d03030] [text-shadow:1px_1px_0_#888]">S</span></Cell>
      <Cell><svg width={26} height={24} viewBox="0 0 26 24"><path d="M13 1l4 4h-3v5h5V7l5 5-5 5v-3h-5v5h3l-4 4-4-4h3v-5H7v3l-5-5 5-5v3h5V5H9z" fill="#1050c8" /></svg></Cell>
      <Cell><svg width={26} height={24} viewBox="0 0 26 24"><path d="m2 22 3-8L18 2l6 5L11 19z" fill="#e8b860" stroke="#8a7040" /><path d="m18 2 6 5 1-3-3-3z" fill="#d06060" /><path d="m2 22 3-8 6 5z" fill="#f0d8b0" /></svg></Cell>
      <Sep />
      <Cell><SideBox>F5</SideBox></Cell>
      <Cell><SideBox><svg width={19} height={17} viewBox="0 0 19 17"><path d="M3 8a6 6 0 0 1 11-3l2-1v6h-6l2-2a3 3 0 0 0-6 0zM16 10a6 6 0 0 1-11 3l-2 1V9h6l-2 2a3 3 0 0 0 6 0z" fill="#40b060" /></svg></SideBox></Cell>
      {nums.map((n) => <Cell key={n}><span className="text-[15px] text-[#234a9c]">{n}</span></Cell>)}
      <div className="h-[34.4px] shrink-0 flex items-center justify-center bg-[#fafafa] border-t-2 border-l-2 border-[#a8a8a8]">
        <span className="text-[17px] text-[#234a9c]">日</span>
      </div>
      {days.map((d) => <Cell key={d}><span className="text-[17px] text-[#234a9c]">{d}</span></Cell>)}
    </div>
  );
}

const statusItems = [
  ["3296.40", "w-[102px]", "text-[#ff1010]"], ["23.54", "w-[75px]", "text-[#ff1010]"], ["0.72%", "w-[85px]", "text-[#ff1010]"], ["5134亿", "w-[96px]", "text-[#101010]"],
];
const statusItems2 = [
  ["4090.57", "w-[102px]", "text-[#ff1010]"], ["39.64", "w-[75px]", "text-[#ff1010]"], ["0.98%", "w-[85px]", "text-[#ff1010]"], ["3829亿", "w-[97px]", "text-[#101010]"],
];
const statusItems3 = [
  ["2440.21", "w-[102px]", "text-[#ff1010]"], ["40.71", "w-[75px]", "text-[#ff1010]"], ["1.70%", "w-[86px]", "text-[#ff1010]"], ["3379亿", "w-[97px]", "text-[#101010]"],
];

function StatusGroup({ name, items }: { name: string; items: string[][] }) {
  return (
    <>
      <span className="w-[54px] text-[23px] text-[#202020]">{name}</span>
      {items.map(([t, w, c]) => (
        <span key={t} className={`${w} ${c} ${DIGIT} text-[17px] whitespace-nowrap`}>
          {t.endsWith("亿") ? <>{t.slice(0, -1)}<span className="text-[23px] font-normal">亿</span></> : t}
        </span>
      ))}
    </>
  );
}

function StatusBar() {
  return (
    <div className="h-[37px] shrink-0 flex items-center pt-[2px] bg-[#f0f0f0] border-t border-[#d8d8d8]">
      <svg width={21} height={24} viewBox="0 0 21 24" className="ml-[2px] mr-[2px] shrink-0">
        <rect x={1} y={1} width={19} height={22} rx={3} fill="#f0a818" stroke="#c08010" />
        <rect x={5} y={5} width={11} height={14} fill="#ffe890" stroke="#d09010" />
      </svg>
      <StatusGroup name="上证" items={statusItems} />
      <StatusGroup name="沪深" items={statusItems2} />
      <StatusGroup name="创业" items={statusItems3} />
      <span className="ml-[-1px] h-full w-[2px] bg-[#c0c0c0]" />
      <span className="ml-[4px] text-[23px] text-[#202020] whitespace-nowrap">总成交</span>
      <span className={`ml-[10px] text-[17px] text-[#101010] ${DIGIT}`}>1</span>
    </div>
  );
}

function SiteBanner() {
  return (
    <div className="absolute left-[1359px] top-[1314px] right-0 bottom-0 flex items-center bg-[#7faad8] whitespace-nowrap">
      <span className="ml-[19px] text-[55px] leading-none font-black text-[#14148c]">公式指标网</span>
      <svg width={80} height={80} viewBox="0 0 80 80" className="ml-[30px] shrink-0">
        <path d="M6 48A35 35 0 0 1 74 48" fill="none" stroke="#d9614f" strokeWidth={11} />
        <path d="M74 52A35 35 0 0 1 40 78" fill="none" stroke="#e8c84a" strokeWidth={11} />
        <path d="M34 3h12v9h4v20h-5v6h10v7H47v8h8v7h-8v18h-14V60h-8v-7h8v-8H25v-7h10v-6h-5V12h4z" fill="#e8c84a" />
        <circle cx={40} cy={8} r={3} fill="#5a6a80" />
        <path id="arc-site" d="M5 54A35 35 0 0 0 32 76" fill="none" />
        <text fontSize={8} fill="#fff">
          <textPath href="#arc-site">www.9m8.cn</textPath>
        </text>
      </svg>
      <span className="ml-[27px] text-[65px] leading-none font-bold text-white [font-family:'Liberation_Serif',serif]">www.9m8.cn</span>
    </div>
  );
}

export default function App() {
  return (
    <div className="relative w-[2160px] h-[1395px] overflow-hidden flex flex-col bg-black [font-family:'Liberation_Sans','Noto_Sans_CJK_SC',sans-serif]">
      <MenuBar />
      <div className="flex-1 min-h-0 flex">
        <div className="w-[1787px] shrink-0 flex flex-col">
          <Toolbar />
          <div className="h-[760px] shrink-0 flex flex-col border-b-2 border-[#a00000]">
            <Legend />
            <PriceChart />
          </div>
          <div className="h-[455px] shrink-0 flex flex-col">
            <VolumeLegend />
            <VolumeChart />
          </div>
          <div className="h-[24px] shrink-0 flex items-stretch border-y-2 border-[#a00000]">
            <DateAxis />
            <span className="flex-1 flex items-center justify-center border-l-2 border-[#a00000] text-[18px] text-[#bdbdbd]">日线</span>
          </div>
          <BottomTabs items={tabs1} h="h-[25px]">
            <span className="ml-auto w-[46px] pt-[3px] flex items-center justify-center border-x border-[#a00000]">模板</span>
            <span className="w-[38px] border-r border-[#a00000]" />
            <span className="w-[38px]" />
          </BottomTabs>
          <BottomTabs items={tabs2} h="h-[27px]" />
        </div>
        <QuotePanel />
        <Sidebar />
      </div>
      <StatusBar />
      <SiteBanner />
    </div>
  );
}
